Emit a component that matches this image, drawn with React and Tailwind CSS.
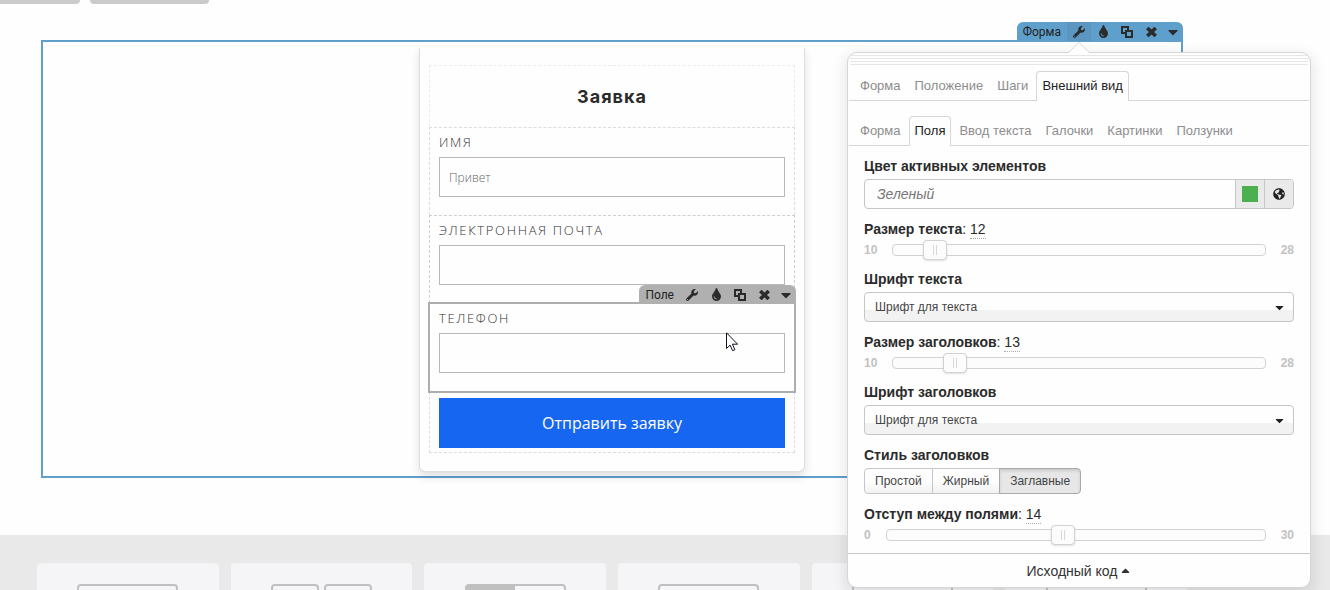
import { useState } from "react";
import { FaWrench, FaTint, FaCaretDown, FaCaretUp, FaGlobeAmericas } from "react-icons/fa";

function CopyIcon() {
  return (
    <svg width="12" height="12" viewBox="0 0 12 12" fill="none" stroke="currentColor" strokeWidth="2">
      <path d="M4 7H1V1h6v3" />
      <rect x="5" y="5" width="6" height="6" />
    </svg>
  );
}

function CrossIcon() {
  return (
    <svg width="11" height="10" viewBox="0 0 11 10" fill="none" stroke="currentColor" strokeWidth="3.6">
      <path d="M1.3 1 9.7 9M9.7 1 1.3 9" />
    </svg>
  );
}

const tools = [
  { name: "Настройки", icon: <FaWrench size={12} /> },
  { name: "Цвет", icon: <FaTint size={13} /> },
  { name: "Копировать", icon: <CopyIcon /> },
  { name: "Удалить", icon: <CrossIcon /> },
  { name: "Ещё", icon: <FaCaretDown size={16} /> },
];

function Toolbar({ title, className, active }) {
  return (
    <div
      className={`absolute z-10 flex h-[19px] items-center rounded-t-md pl-1.5 font-['Roboto',sans-serif] text-xs text-[#222] ${className}`}
    >
      <span className="mr-1.5">{title}</span>
      {tools.map((tool, i) => (
        <button
          key={tool.name}
          type="button"
          aria-label={tool.name}
          className={`flex h-full w-6 items-center justify-center text-[#2b2b2b] last:w-5 ${
            active === i ? "bg-black/5" : ""
          }`}
        >
          {tool.icon}
        </button>
      ))}
    </div>
  );
}

function Field({ id, label, placeholder }) {
  return (
    <div className="px-[9px] pt-1 pb-[18px]">
      <label
        htmlFor={id}
        className="block pb-[5px] text-[13px] leading-5 font-light tracking-[0.13em] text-[#333] uppercase"
      >
        {label}
      </label>
      <input
        id={id}
        placeholder={placeholder}
        className="block h-10 w-full border border-[#b9b9b9] px-[9px] text-xs font-light outline-none placeholder:text-[#666]"
      />
    </div>
  );
}

function OrderForm() {
  return (
    <form className="mx-auto mt-1.5 w-[386px] rounded-b-md border-x border-b border-[#dedede] bg-[#fefefe] px-[9px] pt-[17px] pb-[18px] font-['Open_Sans',sans-serif] shadow-[0_5px_10px_rgba(0,0,0,0.12)]">
      <div className="border border-b-0 border-dashed border-[#ececec] pt-[17px] pb-4">
        <h2 className="text-center font-['Inter',sans-serif] text-lg leading-7 font-bold tracking-[1px] text-[#2b2b2b]">
          Заявка
        </h2>
      </div>
      <div className="border border-b-0 border-dashed border-[#dcdcdc]">
        <Field id="name" label="Имя" placeholder="Привет" />
      </div>
      <div className="border border-b-0 border-dashed border-[#cfcfcf]">
        <Field id="email" label="Электронная почта" />
      </div>
      <div className="relative border border-transparent outline-2 -outline-offset-1 outline-[#adadad]">
        <Toolbar title="Поле" className="-top-[19px] -right-0.5 bg-[#b0b0b0]" />
        <Field id="phone" label="Телефон" />
      </div>
      <div className="border border-t-0 border-dashed border-[#dcdcdc] px-[9px] pt-1.5 pb-1">
        <button type="button" className="h-[50px] w-full bg-[#1766f2] text-base font-medium text-white">
          Отправить заявку
        </button>
      </div>
    </form>
  );
}

function Tabs({ items, selected }) {
  return (
    <div role="tablist" className="flex gap-0.5 border-b border-[#d6d6d6] pl-[5px] text-[13px] leading-5">
      {items.map((item) => (
        <button
          key={item}
          type="button"
          role="tab"
          aria-selected={item === selected}
          className={
            item === selected
              ? "-mb-px rounded-t border border-b-0 border-[#d6d6d6] bg-[#fefefe] px-[5px] pt-1 pb-[5px] text-[#222]"
              : "px-1.5 pt-[5px] pb-1 text-[#8d8d8d]"
          }
        >
          {item}
        </button>
      ))}
    </div>
  );
}

function SliderRow({ id, label, min, max, initial }) {
  const [value, setValue] = useState(initial);

  return (
    <div className="mt-2.5">
      <label htmlFor={id} className="block text-sm leading-5 text-[#2b2b2b]">
        <b>{label}</b>:{" "}
        <span className="inline-block border-b border-dotted border-[#aaa] leading-[17px]">{value}</span>
      </label>
      <div className="flex h-[22px] items-center text-xs font-bold text-[#c2c2c2]">
        <span className="mr-[15px]">{min}</span>
        <div className="flex h-3 flex-1 items-center rounded border border-[#d2d2d2] bg-[#fcfcfc]">
          <input
            id={id}
            type="range"
            min={min}
            max={max}
            value={value}
            onChange={(e) => setValue(Number(e.target.value))}
            className="-mx-3 h-5 w-[calc(100%+24px)] shrink-0 appearance-none bg-transparent [&::-webkit-slider-thumb]:h-5 [&::-webkit-slider-thumb]:w-6 [&::-webkit-slider-thumb]:appearance-none [&::-webkit-slider-thumb]:rounded [&::-webkit-slider-thumb]:border [&::-webkit-slider-thumb]:border-[#d2d2d2] [&::-webkit-slider-thumb]:bg-[#fcfcfc] [&::-webkit-slider-thumb]:bg-[linear-gradient(90deg,transparent_9px,#d8d8d8_9px,#d8d8d8_10px,transparent_10px,transparent_12px,#d8d8d8_12px,#d8d8d8_13px,transparent_13px)] [&::-webkit-slider-thumb]:bg-[length:100%_10px] [&::-webkit-slider-thumb]:bg-center [&::-webkit-slider-thumb]:bg-no-repeat [&::-webkit-slider-thumb]:shadow-[0_1px_2px_rgba(0,0,0,0.12)]"
          />
        </div>
        <span className="ml-[15px]">{max}</span>
      </div>
    </div>
  );
}

function FontSelect({ id, label }) {
  return (
    <div className="mt-2">
      <label htmlFor={id} className="block text-sm leading-5 font-bold text-[#2b2b2b]">
        {label}
      </label>
      <div className="relative mt-[3px]">
        <select
          id={id}
          className="block h-[30px] w-full appearance-none rounded border border-[#c6c6c6] bg-linear-to-b from-[#fefefe] from-60% to-[#f2f2f2] to-60% px-2.5 text-xs text-[#444]"
        >
          <option>Шрифт для текста</option>
        </select>
        <FaCaretDown size={13} className="pointer-events-none absolute top-[9px] right-2 text-[#222]" />
      </div>
    </div>
  );
}

const titleStyles = ["Простой", "Жирный", "Заглавные"];

function SettingsPanel() {
  return (
    <aside className="absolute top-[52px] right-[19px] z-20 w-[464px] rounded-[10px] border border-[#d6d6d6] bg-[#fefefe] font-['Liberation_Sans',sans-serif] shadow-[0_5px_14px_3px_rgba(0,0,0,0.09)]">
      <svg className="absolute -top-[11px] left-[220px]" width="22" height="12" viewBox="0 0 22 12">
        <path d="M0 11 11 .5 22 11v1H0z" fill="#fefefe" />
        <path d="M0 11 11 .5 22 11" fill="none" stroke="#d6d6d6" />
      </svg>
      <div className="mx-0.5 flex flex-col gap-0.5 pt-0.5">
        <hr className="border-[#e6e6e6]" />
        <hr className="border-[#e6e6e6]" />
        <hr className="border-[#e6e6e6]" />
        <hr className="border-[#e6e6e6]" />
      </div>

      <div className="mx-px mt-1.5">
        <Tabs items={["Форма", "Положение", "Шаги", "Внешний вид"]} selected="Внешний вид" />
      </div>
      <div className="mx-px mt-[15px]">
        <Tabs
          items={["Форма", "Поля", "Ввод текста", "Галочки", "Картинки", "Ползунки"]}
          selected="Поля"
        />
      </div>

      <div className="px-4 pt-2.5 pb-[7px]">
        <label htmlFor="accent" className="block text-sm leading-5 font-bold text-[#2b2b2b]">
          Цвет активных элементов
        </label>
        <div className="mt-[3px] flex h-[30px] overflow-hidden rounded border border-[#c6c6c6]">
          <input
            id="accent"
            placeholder="Зеленый"
            className="min-w-0 flex-1 px-3 text-sm italic outline-none placeholder:text-[#777]"
          />
          <button
            type="button"
            aria-label="Выбрать цвет"
            className="flex w-[29px] items-center justify-center border-l border-[#c6c6c6] bg-[#eaeaea]"
          >
            <span className="size-4 bg-[#4caf50]" />
          </button>
          <button
            type="button"
            aria-label="Глобальный цвет"
            className="flex w-[29px] items-center justify-center border-l border-[#c6c6c6] bg-[#eaeaea] text-[#222]"
          >
            <FaGlobeAmericas size={12} />
          </button>
        </div>

        <SliderRow id="text-size" label="Размер текста" min={10} max={28} initial={12} />
        <FontSelect id="text-font" label="Шрифт текста" />
        <SliderRow id="title-size" label="Размер заголовков" min={10} max={28} initial={13} />
        <FontSelect id="title-font" label="Шрифт заголовков" />

        <h3 className="mt-2.5 text-sm leading-5 font-bold text-[#2b2b2b]">Стиль заголовков</h3>
        <div className="mt-[3px] flex text-xs text-[#444]">
          {titleStyles.map((name) => (
            <button
              key={name}
              type="button"
              className={`-mr-px h-[26px] border px-2.5 first:rounded-l last:rounded-r ${
                name === "Заглавные"
                  ? "border-[#a9a9a9] bg-[#e7e7e7] shadow-[inset_0_2px_3px_rgba(0,0,0,0.12)]"
                  : "border-[#c6c6c6] bg-linear-to-b from-[#fefefe] from-50% to-[#f2f2f2]"
              }`}
            >
              {name}
            </button>
          ))}
        </div>

        <SliderRow id="field-gap" label="Отступ между полями" min={0} max={30} initial={14} />
      </div>

      <button
        type="button"
        className="flex h-[34px] w-full items-center justify-center gap-px border-t border-[#c6c6c6] text-sm text-[#333]"
      >
        Исходный код
        <FaCaretUp size={13} />
      </button>
    </aside>
  );
}

function BlockLibrary() {
  return (
    <section className="mt-[57px] flex-1 bg-[#e9e9e9] pt-7 pr-[143px] pl-[37px]">
      <div className="grid grid-cols-6 gap-3">
        {[1, 2, 1, 1, 1, 1].map((count, i) => (
          <div key={i} className="flex h-32 justify-center gap-[5px] rounded bg-[#f5f5f8] pt-[21px]">
            {Array.from({ length: count }, (_, n) => (
              <div
                key={n}
                className={`h-16 rounded-sm border-2 border-[#c0c0c0] ${count === 2 ? "w-12" : "w-[101px]"}`}
              >
                {i === 2 && <div className="h-full w-1/2 bg-[#c0c0c0]" />}
              </div>
            ))}
          </div>
        ))}
      </div>
    </section>
  );
}

export default function App() {
  return (
    <div className="relative flex h-screen flex-col overflow-hidden bg-[#fefefe]">
      <div className="flex gap-2.5">
        <div className="h-1 w-20 rounded-br bg-[#cbcbcb]" />
        <div className="h-1 w-[119px] rounded-b bg-[#cbcbcb]" />
      </div>

      <main className="relative mt-9 mr-[147px] ml-[41px] border-2 border-[#5f9fcb] pb-1">
        <Toolbar title="Форма" active={0} className="-top-5 -right-0.5 bg-[#5f9fcb]" />
        <OrderForm />
      </main>

      <BlockLibrary />
      <SettingsPanel />

      <svg className="absolute top-[332px] left-[726px] z-10" width="13" height="20" viewBox="0 0 13 20">
        <path
          d="M.5.8v15.7l3.6-3.4 2.5 5.6 2.3-1-2.5-5.5h5.2z"
          fill="#fff"
          stroke="#111122"
          strokeWidth="1"
        />
      </svg>
    </div>
  );
}
